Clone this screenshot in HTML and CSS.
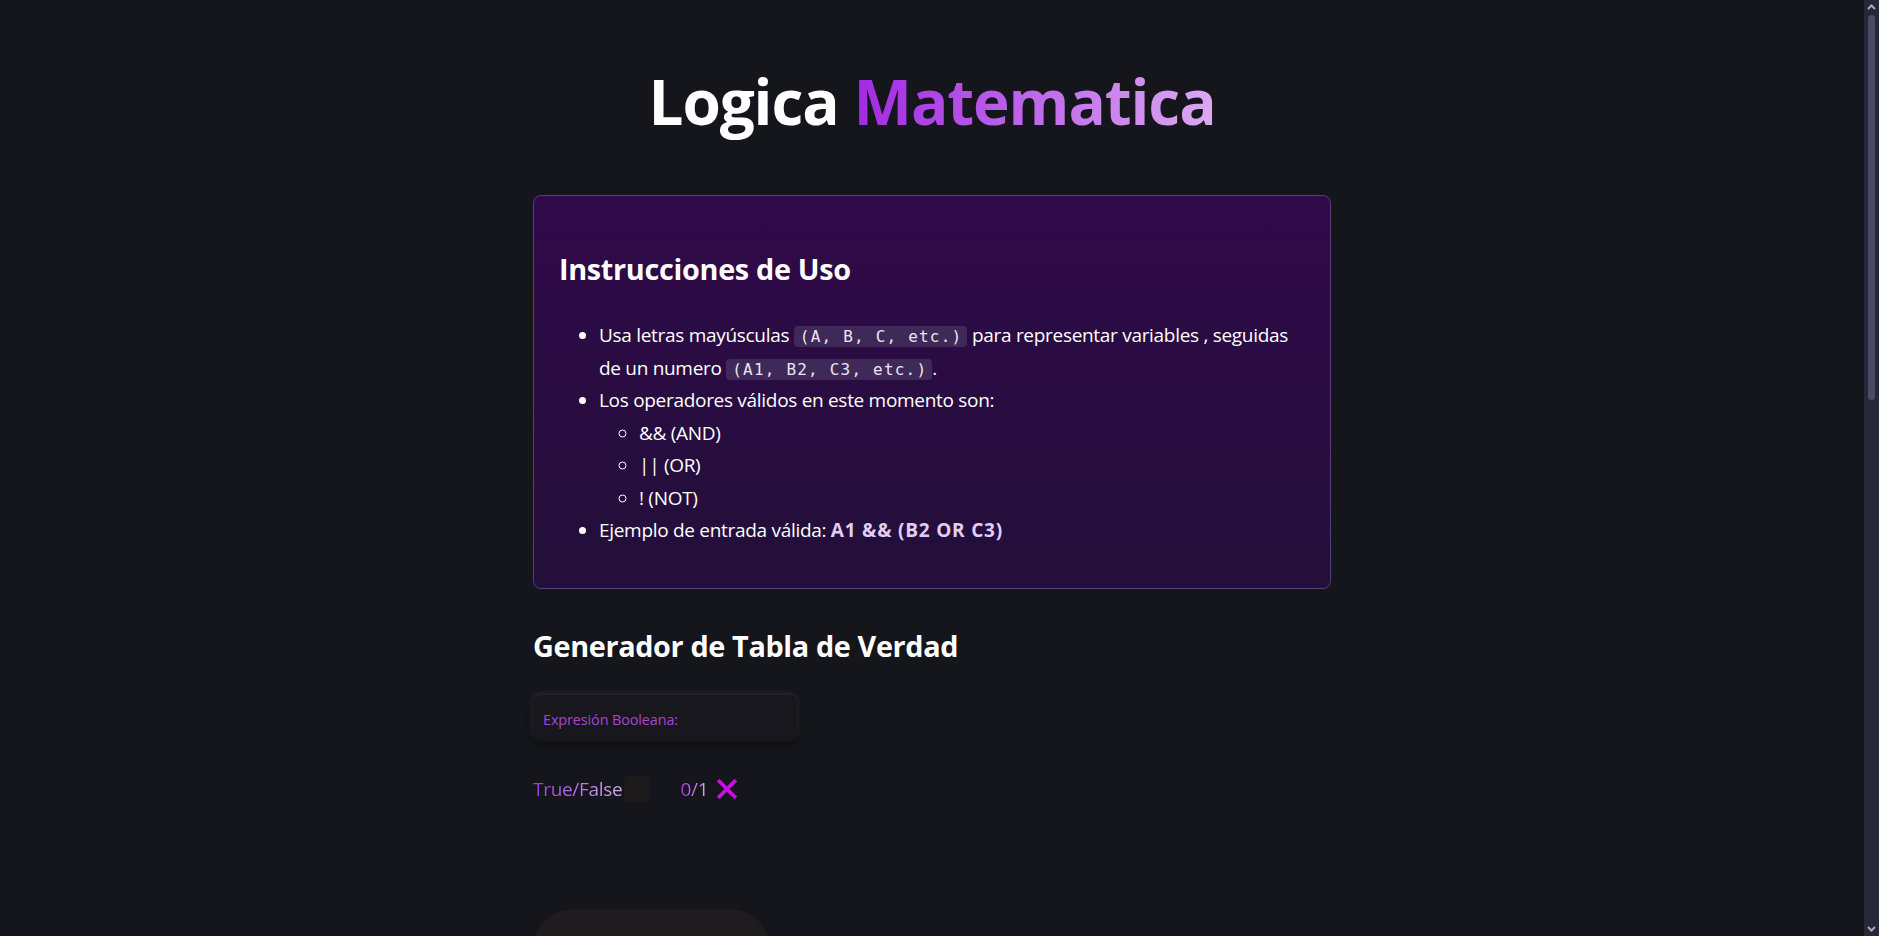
FILE: index.html
```html
<!DOCTYPE html>
<html lang="es">
<head>
<meta charset="utf-8">
<title>Logica Matematica</title>
<link rel="stylesheet" href="styles.css">
</head>
<body>
<div class="viewport">
<main class="page">
  <h1 class="title">Logica <span class="title-accent">Matematica</span></h1>

  <section class="card">
    <h2 class="card-title">Instrucciones de Uso</h2>
    <ul class="list">
      <li>Usa letras mayúsculas <code class="code">(A, B, C, etc.)</code> para representar variables , seguidas de un numero <code class="code">(A1, B2, C3, etc.)</code>.</li>
      <li>Los operadores válidos en este momento son:
        <ul class="sublist">
          <li>&amp;&amp; (AND)</li>
          <li>|| (OR)</li>
          <li>! (NOT)</li>
        </ul>
      </li>
      <li>Ejemplo de entrada válida: <strong class="example">A1 &amp;&amp; (B2 OR C3)</strong></li>
    </ul>
  </section>

  <h2 class="section-title">Generador de Tabla de Verdad</h2>

  <div class="input-box">
    <span class="input-label">Expresión Booleana:</span>
  </div>

  <div class="options">
    <span class="grad-text">True/False</span>
    <span class="checkbox"></span>
    <span class="grad-text zero-one">0/1</span>
    <svg class="x-icon" viewBox="0 0 20 20" width="20" height="20" aria-hidden="true">
      <path d="M2.5 2.5 L17.5 17.5 M17.5 2.5 L2.5 17.5" stroke="#c60fe3" stroke-width="3.8" stroke-linecap="square" fill="none"/>
    </svg>
  </div>

  <div class="bottom-btn"></div>
</main>
</div>
<div class="scrollbar" aria-hidden="true">
  <svg class="sb-arrow" viewBox="0 0 15 15" width="15" height="15"><path d="M4 9 L7.5 5.5 L11 9" stroke="#a9a9b8" stroke-width="2" fill="none"/></svg>
  <div class="sb-thumb"></div>
  <div class="sb-rest"></div>
  <svg class="sb-arrow" viewBox="0 0 15 15" width="15" height="15"><path d="M4 6 L7.5 9.5 L11 6" stroke="#a9a9b8" stroke-width="2" fill="none"/></svg>
</div>
</body>
</html>
```

FILE: styles.css
```css
html {
  background: #15161b;
}
body {
  margin: 0;
  background: #15161b;
  color: #ffffff;
  font-family: "Open Sans", "Noto Sans", sans-serif;
}
.viewport {
  margin-right: 15px;
}
.page {
  width: 798px;
  margin: 0 auto;
  padding: 57px 0 400px;
  display: flex;
  flex-direction: column;
}
.title {
  margin: 0;
  text-align: center;
  font-size: 62px;
  font-weight: 700;
  line-height: 88px;
  letter-spacing: -1.1px;
}
.title-accent {
  background: linear-gradient(90deg, #a229e2 0%, #dcaaf1 100%);
  -webkit-background-clip: text;
  background-clip: text;
  color: transparent;
}
.card {
  margin-top: 50px;
  border: 1px solid #5a3c79;
  border-radius: 8px;
  background: linear-gradient(180deg, #300949 0%, #220f39 100%);
  padding: 54px 25px 41px;
}
.card-title {
  margin: 0 0 31px;
  font-size: 28.8px;
  font-weight: 700;
  line-height: 38px;
  letter-spacing: -0.3px;
}
.list {
  margin: 0;
  padding-left: 40px;
  font-size: 19px;
  line-height: 32.5px;
  letter-spacing: -0.3px;
}
.sublist {
  margin: 0;
  padding-left: 40px;
  list-style-type: circle;
}
.code {
  font-family: "DejaVu Sans Mono", "Liberation Mono", monospace;
  font-size: 16px;
  line-height: 20px;
  letter-spacing: 1.2px;
  background: #3e2959;
  border-radius: 4px;
  padding: 1px 5px 1px 6px;
  color: #ece4f4;
}
.example {
  color: #e3cdf6;
  font-weight: 700;
  letter-spacing: 0.8px;
}
.section-title {
  margin: 38px 0 0;
  font-size: 28.8px;
  font-weight: 700;
  line-height: 38px;
  letter-spacing: -0.35px;
}
.input-box {
  margin-top: 30px;
  width: 264px;
  height: 45px;
  box-sizing: border-box;
  border-radius: 8px;
  background: #17171d;
  box-shadow: 0 -1px 6px rgba(255, 255, 255, 0.13), 0 4px 8px rgba(0, 0, 0, 0.55);
  display: flex;
  align-items: center;
  padding: 4px 10px 0;
}
.input-label {
  color: #a645d6;
  font-size: 14.4px;
  letter-spacing: -0.1px;
}
.options {
  margin-top: 36px;
  display: flex;
  align-items: center;
  font-size: 19px;
  line-height: 26px;
  letter-spacing: -0.3px;
}
.grad-text {
  background: linear-gradient(90deg, #9a36df 0%, #d6aef2 100%);
  -webkit-background-clip: text;
  background-clip: text;
  color: transparent;
}
.checkbox {
  width: 26px;
  height: 26px;
  margin-left: 2px;
  border-radius: 5px;
  background: #1c1a1a;
}
.zero-one {
  margin-left: 30px;
}
.x-icon {
  margin-left: 9px;
}
.bottom-btn {
  margin-top: 107px;
  width: 237px;
  height: 90px;
  border-radius: 40px;
  background: #1f1b1e;
}
.scrollbar {
  position: fixed;
  top: 0;
  right: 0;
  bottom: 0;
  width: 15px;
  background: #272837;
  display: flex;
  flex-direction: column;
  align-items: center;
}
.sb-arrow {
  flex: none;
}
.sb-thumb {
  flex: none;
  width: 7px;
  height: 385px;
  border-radius: 4px;
  background: #4b4a67;
}
.sb-rest {
  flex: 1;
}
```
